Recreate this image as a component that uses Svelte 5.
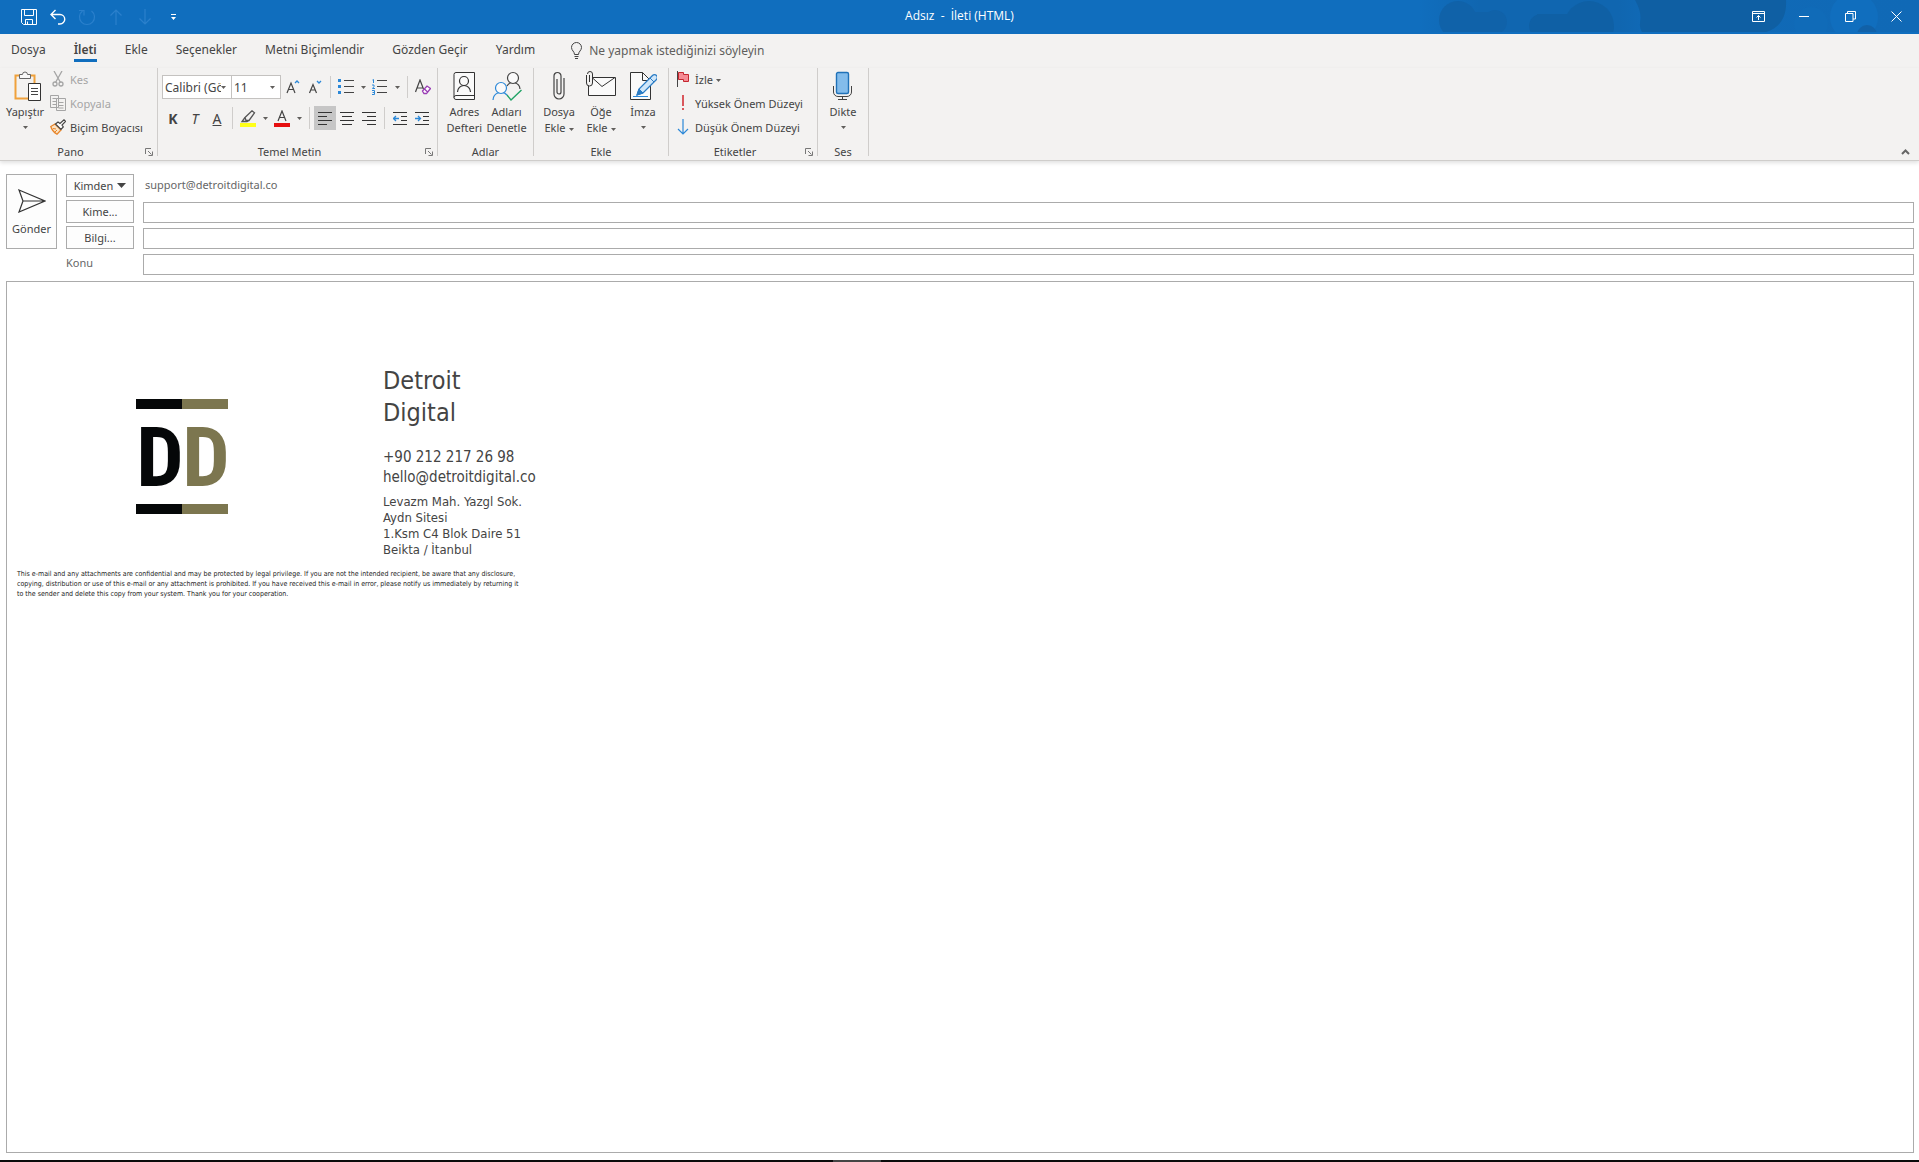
<script lang="ts">
	let font = $state('Calibri (Gövde)');
	let size = $state('11');
	let to = $state('');
	let cc = $state('');
	let subject = $state('');
	let tellMe = $state('');
	let align = $state('left');

	const tabs = ['Dosya', 'İleti', 'Ekle', 'Seçenekler', 'Metni Biçimlendir', 'Gözden Geçir', 'Yardım'];
	let activeTab = $state('İleti');
</script>

{#snippet caret()}
	<svg class="caret" width="5" height="3" viewBox="0 0 5 3"><path d="M0 0h5L2.5 3z" fill="#605e5c" /></svg>
{/snippet}

{#snippet launcher(label: string)}
	<button class="launcher" aria-label={label}>
		<svg width="8" height="8" viewBox="0 0 8 8" fill="none" stroke="#777">
			<path d="M.5 6V.5H6M3 3l3.5 3.5M7.5 3.5v4h-4" />
		</svg>
	</button>
{/snippet}

<div class="window">
	<header class="titlebar">
		<svg class="clouds" width="500" height="32" viewBox="0 0 500 32">
			<defs>
				<linearGradient id="haze" x1="0" x2="1">
					<stop offset="0" stop-color="#106ebe" />
					<stop offset=".12" stop-color="#1066b0" />
					<stop offset=".4" stop-color="#1066b0" />
					<stop offset=".46" stop-color="#106ab7" />
					<stop offset="1" stop-color="#1069b6" />
				</linearGradient>
			</defs>
			<rect width="500" height="32" fill="url(#haze)" />
			<g fill="#1062a9">
				<circle cx="39" cy="20" r="19" />
				<circle cx="76" cy="22" r="12" />
				<rect x="30" y="12" width="46" height="20" />
			</g>
			<g fill="#0f60a5">
				<circle cx="122" cy="26" r="12" />
				<circle cx="170" cy="26" r="25" />
				<rect x="118" y="14" width="54" height="18" />
			</g>
			<path d="M216 0h151c1 18-7 28-20 32H223c-6-10 4-12-7-32z" fill="#0f5fa3" />
			<circle cx="392" cy="24" r="17" fill="#106bb8" />
			<circle cx="435" cy="17" r="24" fill="#106ebe" />
			<circle cx="448" cy="35" r="10" fill="#1161a8" />
		</svg>
		<div class="quick">
			<button aria-label="Kaydet">
				<svg width="16" height="16" viewBox="0 0 16 16" fill="none" stroke="#fff">
					<path d="M.5.5h15v15h-13l-2-2zM3.500.5v6h9v-6M4.500 15.500v-5h7v5M6.500 12.500v3" />
				</svg>
			</button>
			<button aria-label="Geri Al">
				<svg width="16" height="16" viewBox="0 0 16 16" fill="none" stroke="#fff" stroke-width="1.400">
					<path d="M5.500 1 1 5.500 5.500 10M1.500 5.500H10a4.700 4.700 0 0 1 0 9.500H8" />
				</svg>
			</button>
			<button aria-label="Yinele">
				<svg width="18" height="17" viewBox="0 0 18 17" fill="none" stroke="#2b80cc" stroke-width="1.200">
					<path d="M13.500 2a7.500 7.500 0 1 1-9 0M1 1.500h5v5" />
				</svg>
			</button>
			<button aria-label="Önceki Öğe">
				<svg width="14" height="16" viewBox="0 0 14 16" fill="none" stroke="#2b80cc" stroke-width="1.200">
					<path d="M7 16V1M1.500 6.500 7 1l5.500 5.500" />
				</svg>
			</button>
			<button aria-label="Sonraki Öğe">
				<svg width="14" height="16" viewBox="0 0 14 16" fill="none" stroke="#2b80cc" stroke-width="1.200">
					<path d="M7 0v15M1.500 9.500 7 15l5.500-5.500" />
				</svg>
			</button>
			<button aria-label="Hızlı Erişim Araç Çubuğunu Özelleştir">
				<svg width="5" height="6" viewBox="0 0 5 6"><path d="M0 0h5v1H0zM0 3h5L2.500 6z" fill="#fff" /></svg>
			</button>
		</div>
		<h1>Adsız &nbsp;-&nbsp; İleti (HTML)</h1>
		<div class="controls">
			<button aria-label="Şerit Görüntüleme Seçenekleri">
				<svg width="13" height="11" viewBox="0 0 13 11" fill="none" stroke="#fff">
					<path d="M.5.5h12v10H.5zM.5 2.500h12M6.500 9V4.500M4.500 6.500l2-2 2 2" />
				</svg>
			</button>
			<button aria-label="Simge Durumuna Küçült">
				<svg width="10" height="11" viewBox="0 0 10 11"><path d="M0 5h10v1H0z" fill="#fff" /></svg>
			</button>
			<button aria-label="Önceki Boyut">
				<svg width="11" height="11" viewBox="0 0 11 11" fill="none" stroke="#fff">
					<path d="M.5 2.500h7.500v8H.5zM2.500 2.500v-2h8v7.500H8" />
				</svg>
			</button>
			<button aria-label="Kapat">
				<svg width="11" height="11" viewBox="0 0 11 11" stroke="#fff"><path d="M.5.5l10 10M10.500.5l-10 10" /></svg>
			</button>
		</div>
	</header>

	<nav class="tabs">
		{#each tabs as tab}
			<button class:active={activeTab === tab} onclick={() => (activeTab = tab)}>{tab}</button>
		{/each}
		<label class="tell-me">
			<svg width="11" height="17" viewBox="0 0 11 17" fill="none" stroke="#444">
				<path d="M3.500 12.500c0-3-3-4-3-7a5 5 0 0 1 10 0c0 3-3 4-3 7zM3.500 14.500h4M4 16.500h3" />
			</svg>
			<input bind:value={tellMe} placeholder="Ne yapmak istediğinizi söyleyin" aria-label="Ne yapmak istediğinizi söyleyin" />
		</label>
	</nav>

	<div class="ribbon">
		<section class="group pano">
			<div class="tools">
				<button class="big">
					<svg width="34" height="30" viewBox="-6 0 34 30" fill="none">
						<path d="M8 4.500H1.500v23H14M15 4.500h5.500V12" stroke="#f0a13c" stroke-width="2" />
						<path d="M5.500 7.500v-4h3a2.500 2.500 0 0 1 5 0h3v4z" fill="#f8f8f8" stroke="#666" />
						<path d="M14.500 12.500h12v17h-12z" fill="#fff" stroke="#333" />
						<path d="M17 17.500h7M17 20.500h7M17 23.500h7" stroke="#444" />
					</svg>
					<span>Yapıştır</span>
					{@render caret()}
				</button>
				<div class="stack">
					<button class="small" disabled>
						<svg width="16" height="16" viewBox="0 0 16 16" fill="none" stroke="#a5a5a5" stroke-width="1.300">
							<path d="M4 0l6.500 11.500M12 0 5.500 11.500" />
							<circle cx="5" cy="13" r="2" /><circle cx="11" cy="13" r="2" />
						</svg>
						Kes
					</button>
					<button class="small" disabled>
						<svg width="16" height="16" viewBox="0 0 16 16" fill="#f3f2f1" stroke="#a5a5a5">
							<path d="M.5.5h8v12h-8zM2.500 3.500h4M2.500 6.500h4M2.500 9.500h4M6.500 3.500h9v12h-9zM8.500 7.500h5M8.500 10.500h5M8.500 13h5" />
						</svg>
						Kopyala
					</button>
					<button class="small">
						<svg width="16" height="16" viewBox="0 0 16 16" fill="none">
							<path d="M.8 7.500 5 5l6 6-4 4.200C5 14 2 12 .8 7.500z" fill="#fbe3c3" stroke="#e8852a" stroke-width="1.300" />
							<path d="M3 9.500l3 .5M5 13l2-2" stroke="#e8852a" />
							<path d="M5.500 5 8 3l2 1.500L14 .8l1.500 1.500L12 6l1.300 2L11 10.500z" fill="#fff" stroke="#444" stroke-width="1.200" />
						</svg>
						Biçim Boyacısı
					</button>
				</div>
			</div>
			<h2>Pano</h2>
			{@render launcher('Pano seçenekleri')}
		</section>

		<section class="group text">
			<div class="tools rows">
				<div class="row">
					<div class="pick font">
						<select bind:value={font} aria-label="Yazı Tipi"><option>Calibri (Gövde)</option><option>Arial</option></select>
						{@render caret()}
					</div>
					<div class="pick size">
						<select bind:value={size} aria-label="Yazı Tipi Boyutu"><option>11</option><option>12</option></select>
						{@render caret()}
					</div>
					<button class="icon" aria-label="Yazı Tipini Büyüt">
						<svg width="14" height="16" viewBox="0 0 14 16" fill="none">
							<path d="M1 14 5 4l4 10M2.500 10.500h5" stroke="#444" stroke-width="1.200" />
							<path d="M9 4l2-2 2 2" stroke="#2b88d8" stroke-width="1.300" />
						</svg>
					</button>
					<button class="icon" aria-label="Yazı Tipini Küçült">
						<svg width="14" height="16" viewBox="0 0 14 16" fill="none">
							<path d="M1.500 14 5 5.500 8.500 14M3 11h4" stroke="#444" stroke-width="1.200" />
							<path d="M9 2l2 2 2-2" stroke="#2b88d8" stroke-width="1.300" />
						</svg>
					</button>
					<i class="rule"></i>
					<button class="icon split" aria-label="Madde İşaretleri">
						<svg width="16" height="16" viewBox="0 0 16 16">
							<path d="M0 0h3v3H0zM0 6h3v3H0zM0 12h3v3H0z" fill="#2b88d8" />
							<path d="M6 1h10v1H6zM6 7h10v1H6zM6 13h10v1H6z" fill="#444" />
						</svg>
						{@render caret()}
					</button>
					<button class="icon split" aria-label="Numaralandırma">
						<svg width="16" height="16" viewBox="0 0 16 16" fill="none">
							<path d="M.5 1 1.500.5V4M0 6h2v1.500L.5 9.500H3M0 11.500h2.500v4H0M.5 13.500h2" stroke="#2b88d8" />
							<path d="M5 1.500h10M5 7.500h10M5 13.500h10" stroke="#444" />
						</svg>
						{@render caret()}
					</button>
					<i class="rule"></i>
					<button class="icon" aria-label="Tüm Biçimlendirmeyi Temizle">
						<svg width="16" height="16" viewBox="0 0 16 16" fill="none">
							<path d="M.5 13 5 1l3.500 9M2 9h6" stroke="#444" stroke-width="1.200" />
							<path d="M7.500 12 12 7l3.500 2.500-4 5H9zM9.500 10l3 3" fill="#fff" stroke="#9b3fb5" stroke-width="1.300" />
						</svg>
					</button>
				</div>
				<div class="row">
					<button class="icon letter"><b>K</b></button>
					<button class="icon letter"><em>T</em></button>
					<button class="icon letter"><u>A</u></button>
					<i class="rule"></i>
					<button class="icon split" aria-label="Metin Vurgu Rengi">
						<svg width="16" height="17" viewBox="0 0 16 17" fill="none">
							<path d="M0 13h16v4H0z" fill="#ffff19" />
							<path d="M5 7.500 12 .8l2.500 2L9 10.500H6zM5 7.500 2 11.500h5l2-1" fill="#f3f2f1" stroke="#555" stroke-width="1.300" />
						</svg>
						{@render caret()}
					</button>
					<button class="icon split" aria-label="Yazı Tipi Rengi">
						<svg width="16" height="17" viewBox="0 0 16 17" fill="none">
							<path d="M0 13h16v4H0z" fill="#e60f0f" />
							<path d="M4 11 8 1l4 10M5.500 7.500h5" stroke="#444" stroke-width="1.200" />
						</svg>
						{@render caret()}
					</button>
					<i class="rule"></i>
					<button class="icon align" class:on={align === 'left'} onclick={() => (align = 'left')} aria-label="Sola Hizala">
						<svg width="14" height="13" viewBox="0 0 14 13" stroke="#333"><path d="M0 .5h14M0 4.500h9M0 8.500h14M0 12.500h9" /></svg>
					</button>
					<button class="icon align" class:on={align === 'center'} onclick={() => (align = 'center')} aria-label="Ortala">
						<svg width="14" height="13" viewBox="0 0 14 13" stroke="#333"><path d="M0 .5h14M2 4.500h10M0 8.500h14M2 12.500h10" /></svg>
					</button>
					<button class="icon align" class:on={align === 'right'} onclick={() => (align = 'right')} aria-label="Sağa Hizala">
						<svg width="14" height="13" viewBox="0 0 14 13" stroke="#333"><path d="M0 .5h14M5 4.500h9M0 8.500h14M5 12.500h9" /></svg>
					</button>
					<i class="rule"></i>
					<button class="icon align" aria-label="Girintiyi Azalt">
						<svg width="14" height="13" viewBox="0 0 14 13" fill="none">
							<path d="M0 .5h14M8 4.500h6M8 8.500h6M0 12.500h14" stroke="#333" />
							<path d="M6 6.500H.8M3 4 .5 6.500 3 9" stroke="#2b88d8" stroke-width="1.300" />
						</svg>
					</button>
					<button class="icon align" aria-label="Girintiyi Artır">
						<svg width="14" height="13" viewBox="0 0 14 13" fill="none">
							<path d="M0 .5h14M8 4.500h6M8 8.500h6M0 12.500h14" stroke="#333" />
							<path d="M0 6.500h5.200M3 4l2.500 2.500L3 9" stroke="#2b88d8" stroke-width="1.300" />
						</svg>
					</button>
				</div>
			</div>
			<h2>Temel Metin</h2>
			{@render launcher('Temel Metin seçenekleri')}
		</section>

		<section class="group names">
			<div class="tools">
				<button class="big">
					<svg width="28" height="30" viewBox="0 0 28 30" fill="none" stroke="#333">
						<path d="M6 1.500h18.500v27H6A2 2 0 0 1 4 26.500v-23a2 2 0 0 1 2-2zM4 26.500a2 2 0 0 1 2-2h18.500" fill="#fafafa" />
						<circle cx="14" cy="10" r="4.500" stroke-width="1.200" />
						<path d="M7.500 21a6.500 6.500 0 0 1 13 0" stroke-width="1.200" />
					</svg>
					<span>Adres<br />Defteri</span>
				</button>
				<button class="big">
					<svg width="30" height="30" viewBox="0 0 30 30" fill="none" stroke-width="1.200">
						<path d="M15 15a7 7 0 0 1 13 3" stroke="#444" />
						<circle cx="21" cy="7" r="5.500" fill="#fafafa" stroke="#444" />
						<path d="M1 29a8 8 0 0 1 14-5" stroke="#2b88d8" />
						<circle cx="9" cy="17" r="5.500" fill="#fafafa" stroke="#2b88d8" />
						<path d="M15 24l4 5 10.500-10" stroke="#21a366" stroke-width="1.400" />
					</svg>
					<span>Adları<br />Denetle</span>
				</button>
			</div>
			<h2>Adlar</h2>
		</section>

		<section class="group include">
			<div class="tools">
				<button class="big">
					<svg width="12" height="30" viewBox="0 0 12 30" fill="none" stroke="#444" stroke-width="1.200">
						<path d="M8 8v13a2 2 0 0 1-4 0V8M8 20V5a3.500 3.500 0 0 0-7 0v18a5 5 0 0 0 10 0V7" />
					</svg>
					<span>Dosya<br />Ekle{@render caret()}</span>
				</button>
				<button class="big">
					<svg width="30" height="30" viewBox="0 0 30 30" fill="none" stroke="#333">
						<path d="M2.500 6.500h27v18h-27z" fill="#fafafa" />
						<path d="M6 6.500l10 9 13-9" />
						<path d="M.5 4v8a3 3 0 0 0 6 0V3a2.500 2.500 0 0 0-5 0M3.500 4v7" fill="#f3f2f1" />
					</svg>
					<span>Öğe<br />Ekle{@render caret()}</span>
				</button>
				<button class="big">
					<svg width="28" height="30" viewBox="0 0 28 30" fill="none">
						<path d="M1.500 1.500h12l8 8v19h-20z" fill="#fafafa" stroke="#333" />
						<path d="M13.500 1.500v8h8" stroke="#333" />
						<path d="M4 25.500h15" stroke="#2b88d8" />
						<path d="M8 24l2-6L23.500 4.500a2.500 2.500 0 0 1 4 4L14 22z" fill="#cfe6f9" stroke="#2b7cc4" stroke-width="1.300" />
						<path d="M8 24l2-6 4 4zM21 7l4 4" fill="#2b7cc4" stroke="#2b7cc4" />
					</svg>
					<span>İmza</span>
					{@render caret()}
				</button>
			</div>
			<h2>Ekle</h2>
		</section>

		<section class="group tags">
			<div class="tools">
				<div class="stack">
					<button class="small">
						<svg width="16" height="16" viewBox="0 0 16 16" fill="none">
							<path d="M3.500 1.500h5v2h5v7h-5v-2h-5z" fill="#f58b94" stroke="#c4262e" />
							<path d="M2.500 0v16" stroke="#444" />
						</svg>
						<span>İzle{@render caret()}</span>
					</button>
					<button class="small">
						<svg width="16" height="16" viewBox="0 0 16 16"><path d="M7 0h2v11H7zM7 13h2v2H7z" fill="#d9575c" /></svg>
						Yüksek Önem Düzeyi
					</button>
					<button class="small">
						<svg width="16" height="16" viewBox="0 0 16 16" fill="none" stroke="#2b88d8" stroke-width="1.200">
							<path d="M8 0v15M3 10l5 5 5-5" />
						</svg>
						Düşük Önem Düzeyi
					</button>
				</div>
			</div>
			<h2>Etiketler</h2>
			{@render launcher('Etiket seçenekleri')}
		</section>

		<section class="group voice">
			<div class="tools">
				<button class="big">
					<svg width="20" height="30" viewBox="0 0 20 30" fill="none">
						<rect x="3.500" y="1.500" width="12" height="21" rx="1.500" fill="#83bceb" stroke="#2072b8" stroke-width="1.400" />
						<path d="M.5 15v6a4.500 4.500 0 0 0 4.500 4.500h9a4.500 4.500 0 0 0 4.500-4.500v-6M9.500 25.500v3M5 28.500h9" stroke="#444" />
					</svg>
					<span>Dikte</span>
					{@render caret()}
				</button>
			</div>
			<h2>Ses</h2>
		</section>

		<button class="collapse" aria-label="Şeridi Daralt">
			<svg width="9" height="6" viewBox="0 0 9 6" fill="none" stroke="#666" stroke-width="2"><path d="M1 5l3.500-3.500L8 5" /></svg>
		</button>
	</div>

	<form class="envelope" onsubmit={(e) => e.preventDefault()}>
		<button class="send">
			<svg width="28" height="24" viewBox="0 0 28 24" fill="none" stroke="#333" stroke-width="1.200">
				<path d="M1 1l26 11L1 23l4-11zM5 12h22" />
			</svg>
			Gönder
		</button>
		<div class="fields">
			<button type="button" class="who">
				Kimden
				<svg width="9" height="5" viewBox="0 0 9 5"><path d="M0 0h9L4.500 5z" fill="#444" /></svg>
			</button>
			<span class="sender">support@detroitdigital.co</span>
			<button type="button" class="who">Kime...</button>
			<input bind:value={to} aria-label="Kime" />
			<button type="button" class="who">Bilgi...</button>
			<input bind:value={cc} aria-label="Bilgi" />
			<label for="subject">Konu</label>
			<input id="subject" bind:value={subject} />
		</div>
	</form>

	<main class="message">
		<div class="signature">
			<svg class="logo" width="92" height="116" viewBox="0 0 92 116" role="img" aria-label="Detroit Digital">
				<path d="M0 0h46v10H0zM0 105h46v10H0z" fill="#050708" />
				<path d="M46 0h46v10H46zM46 105h46v10H46z" fill="#7c764f" />
				<text x="24" y="87" fill="#050708">D</text>
				<text x="70" y="87" fill="#7c764f">D</text>
			</svg>
			<div class="card">
				<p class="name">Detroit<br />Digital</p>
				<p class="contact">+90 212 217 26 98<br />hello@detroitdigital.co</p>
				<p class="address">
					Levazm Mah. Yazgl Sok.<br />Aydn Sitesi<br />1.Ksm C4 Blok Daire 51<br />Beikta / Ìtanbul
				</p>
			</div>
		</div>
		<p class="legal">
			This e-mail and any attachments are confidential and may be protected by legal privilege. If you are not the intended recipient, be aware that any disclosure,<br />
			copying, distribution or use of this e-mail or any attachment is prohibited. If you have received this e-mail in error, please notify us immediately by returning it<br />
			to the sender and delete this copy from your system. Thank you for your cooperation.
		</p>
	</main>

	<footer class="taskbar"><span></span></footer>
</div>

<style>
	:global(body) {
		margin: 0;
	}

	.window {
		display: flex;
		flex-direction: column;
		min-height: 100vh;
		background: #fff;
		color: #444;
		font-family: 'Noto Sans', 'Open Sans', sans-serif;
		font-size: 12px;
	}

	button,
	input,
	select {
		font: inherit;
		color: inherit;
		box-sizing: border-box;
	}

	button {
		display: flex;
		align-items: center;
		justify-content: center;
		padding: 0;
		border: none;
		background: none;
	}

	h1,
	h2,
	p {
		margin: 0;
		font-weight: 400;
	}

	svg {
		flex: none;
	}

	/* title bar */
	.titlebar {
		position: relative;
		display: grid;
		grid-template-columns: 1fr auto 1fr;
		align-items: center;
		height: 34px;
		background: #106ebe;
		color: #fff;
	}

	.clouds {
		position: absolute;
		top: 0;
		right: 0;
	}

	.quick {
		display: flex;
		padding-left: 14px;
	}

	.quick button {
		width: 29px;
		height: 32px;
	}

	h1 {
		font-family: 'Open Sans', sans-serif;
		font-size: 12px;
		line-height: 30px;
		padding-bottom: 2px;
	}

	.controls {
		position: relative;
		display: flex;
		justify-content: flex-end;
	}

	.controls button {
		width: 46px;
		height: 34px;
		padding-bottom: 1px;
	}

	/* tabs */
	.tabs {
		display: flex;
		gap: 28px;
		height: 34px;
		padding-left: 11px;
		background: #f3f2f1;
	}

	.tabs button {
		height: 28px;
		padding-top: 5px;
		border-bottom: 3px solid transparent;
	}

	.tabs .active {
		border-color: #106ebe;
		font-weight: 600;
	}

	.tell-me {
		display: flex;
		align-items: center;
		gap: 7px;
		height: 32px;
		margin-left: 8px;
	}

	.tell-me input {
		width: 240px;
		padding: 0;
		border: none;
		background: none;
	}

	.tell-me input::placeholder {
		color: #605e5c;
	}

	/* ribbon */
	.ribbon {
		position: relative;
		z-index: 1;
		display: flex;
		height: 92px;
		background: #f3f2f1;
		border-bottom: 1px solid #cfcdcb;
		box-shadow: 0 2px 4px #0000001f;
		font-size: 11px;
	}

	.group {
		position: relative;
		display: flex;
		flex-direction: column;
		justify-content: space-between;
		box-sizing: border-box;
		height: 88px;
		border-right: 1px solid #cfcdcb;
	}

	.group h2 {
		font-size: 11px;
		line-height: 16px;
		text-align: center;
		padding-right: 16px;
		margin-bottom: -4px;
	}

	.names h2,
	.include h2,
	.voice h2 {
		padding-right: 0;
	}

	.pano {
		width: 158px;
	}

	.text {
		width: 280px;
	}

	.names {
		width: 96px;
	}

	.include {
		width: 135px;
	}

	.tags {
		width: 149px;
	}

	.voice {
		width: 51px;
	}

	.tools {
		display: flex;
		justify-content: center;
	}

	.pano .tools {
		justify-content: flex-start;
		padding-left: 5px;
		gap: 5px;
	}

	.tags .tools {
		justify-content: flex-start;
		padding-left: 6px;
	}

	.names .tools,
	.include .tools {
		gap: 2px;
	}

	.big {
		flex-direction: column;
		justify-content: flex-start;
		min-width: 40px;
		padding-top: 3px;
		line-height: 16px;
	}

	.big > svg:first-child {
		margin-bottom: 3px;
	}

	.big > .caret {
		margin-top: 6px;
	}

	span .caret {
		margin-left: 3px;
		vertical-align: middle;
	}

	.stack {
		margin-top: -1px;
	}

	.small {
		justify-content: flex-start;
		gap: 4px;
		height: 24px;
		white-space: nowrap;
	}

	.small:disabled {
		color: #a5a5a5;
	}

	.launcher {
		position: absolute;
		right: 4px;
		bottom: 0;
	}

	.rows {
		flex-direction: column;
		gap: 7px;
		padding: 7px 0 0 4px;
	}

	.row {
		display: flex;
		align-items: center;
		height: 24px;
	}

	.pick {
		display: flex;
		align-items: center;
		box-sizing: border-box;
		height: 24px;
		padding-right: 5px;
		border: 1px solid #c4c2c0;
		background: #fff;
		font-size: 12px;
	}

	.pick select {
		appearance: none;
		flex: 1;
		min-width: 0;
		padding: 0 0 0 2px;
		border: none;
		background: none;
	}

	.pick.font {
		width: 70px;
	}

	.pick.size {
		width: 50px;
		margin-left: -1px;
	}

	.icon {
		width: 22px;
		height: 24px;
	}

	.size + .icon {
		margin-left: 1px;
	}

	.icon.split {
		width: 34px;
		gap: 7px;
	}

	.letter {
		font-size: 14px;
	}

	.on {
		background: #c6c6c6;
	}

	.rule {
		width: 1px;
		height: 22px;
		margin: 0 4px;
		background: #cfcdcb;
	}

	.collapse {
		margin-left: auto;
		align-self: flex-end;
		padding: 5px 9px;
	}

	/* address fields */
	.envelope {
		display: flex;
		gap: 9px;
		padding: 13px 5px 6px 6px;
		font-size: 11px;
	}

	.send,
	.who {
		border: 1px solid #ababab;
		background: #fdfdfd;
	}

	.send {
		flex-direction: column;
		gap: 8px;
		width: 51px;
		height: 75px;
		padding-top: 2px;
	}

	.fields {
		flex: 1;
		display: grid;
		grid-template-columns: 68px 1fr;
		gap: 3px 9px;
		grid-auto-rows: 23px;
	}

	.who {
		gap: 4px;
	}

	.fields input {
		height: 21px;
		align-self: end;
		border: 1px solid #ababab;
		background: #fff;
	}

	.sender,
	label[for] {
		line-height: 22px;
		color: #666;
	}

	.sender {
		padding-left: 2px;
	}

	/* message body */
	.message {
		flex: 1;
		margin: 0 5px 7px 6px;
		border: 1px solid #ababab;
		font-family: 'DejaVu Sans Condensed', 'DejaVu Sans', sans-serif;
	}

	.signature {
		display: flex;
		align-items: flex-start;
		gap: 155px;
		padding: 83px 0 0 129px;
	}

	.logo {
		margin-top: 34px;
		overflow: visible;
	}

	.logo text {
		font-family: 'Roboto Condensed', 'Liberation Sans Narrow', sans-serif;
		font-size: 84px;
		font-weight: 700;
		text-anchor: middle;
	}

	.name {
		font-size: 25px;
		line-height: 32px;
	}

	.contact {
		margin-top: 18px;
		font-size: 15px;
		line-height: 20px;
	}

	.address {
		margin-top: 7px;
		font-size: 13px;
		line-height: 16px;
	}

	.legal {
		margin: 11px 0 0 10px;
		font-size: 7px;
		line-height: 10px;
		color: #222;
	}

	.taskbar {
		height: 2px;
		background: #0a0a0a;
		display: grid;
		grid-template-columns: 833fr 48fr 1038fr;
	}

	.taskbar span {
		grid-column: 2;
		background: #444;
	}
</style>
